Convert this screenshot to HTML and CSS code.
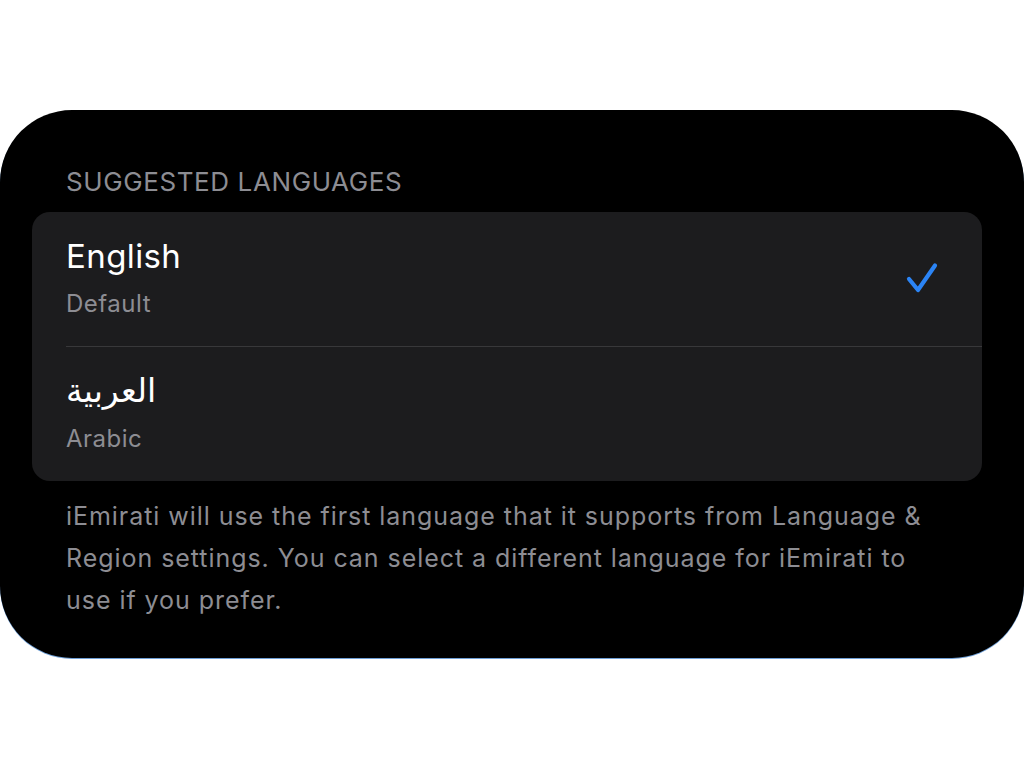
FILE: index.html
```html
<!DOCTYPE html>
<html lang="en">
<head>
<meta charset="utf-8">
<title>Language</title>
<link rel="stylesheet" href="styles.css">
</head>
<body>
<div class="panel">
  <div class="section-header">SUGGESTED LANGUAGES</div>
  <div class="card">
    <div class="row">
      <div class="row-text">
        <div class="row-title">English</div>
        <div class="row-sub">Default</div>
      </div>
      <svg class="check" width="34" height="34" viewBox="0 0 34 34" aria-hidden="true">
        <path d="M5 18 L14 29 L31 4.5" fill="none" stroke="#2b84f5" stroke-width="4.2" stroke-linecap="round" stroke-linejoin="round"/>
      </svg>
    </div>
    <div class="divider"></div>
    <div class="row">
      <div class="row-text">
        <div class="row-title arabic" lang="ar" dir="rtl">العربية</div>
        <div class="row-sub">Arabic</div>
      </div>
    </div>
  </div>
  <p class="footer">iEmirati will use the first language that it supports from Language &amp; Region settings. You can select a different language for iEmirati to use if you prefer.</p>
</div>
</body>
</html>
```

FILE: styles.css
```css
html, body {
  margin: 0;
  padding: 0;
  background: #ffffff;
}
body {
  width: 1024px;
  height: 768px;
  font-family: Inter, "Noto Sans", "DejaVu Sans", sans-serif;
}
.panel {
  margin-top: 110px;
  height: 548px;
  box-sizing: border-box;
  background: #000000;
  border-radius: 72px;
  padding: 56px 42px 0 32px;
  box-shadow: 0 1px 0 #6f9fd6;
}
.section-header {
  padding-left: 34px;
  font-size: 26px;
  line-height: 32px;
  color: #8d8d93;
  letter-spacing: 0.6px;
}
.card {
  margin-top: 14px;
  background: #1c1c1e;
  border-radius: 18px;
  overflow: hidden;
}
.row {
  display: flex;
  align-items: center;
  justify-content: space-between;
  padding: 24px 44px 27px 34px;
}
.row-text {
  display: flex;
  flex-direction: column;
  gap: 13px;
}
.row-title {
  font-size: 33px;
  line-height: 40px;
  color: #ffffff;
  text-align: left;
  letter-spacing: 0.4px;
}
.row-title.arabic {
  font-family: "DejaVu Sans", "Noto Sans", sans-serif;
  font-size: 33px;
  letter-spacing: 0;
  align-self: flex-start;
}
.row-sub {
  font-size: 24px;
  line-height: 30px;
  color: #8d8d93;
  letter-spacing: 0.5px;
}
.divider {
  height: 1px;
  background: #38383a;
  margin-left: 34px;
}
.check {
  display: block;
}
.footer {
  margin: 14px 0 0 0;
  padding: 0 40px 0 34px;
  font-size: 25px;
  line-height: 42px;
  color: #8d8d93;
  letter-spacing: 0.95px;
}
```
